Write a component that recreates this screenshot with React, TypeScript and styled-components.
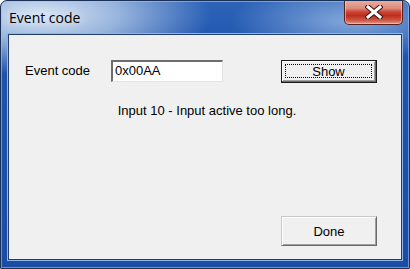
import React from "react";
import styled, { createGlobalStyle } from "styled-components";

const Global = createGlobalStyle`
  html, body { margin: 0; padding: 0; background: #ffffff; }
  body { width: 410px; height: 269px; overflow: hidden; }
`;

const Window = styled.div`
  box-sizing: border-box;
  width: 410px;
  height: 269px;
  display: flex;
  flex-direction: column;
  border: 1px solid #1a3056;
  border-radius: 7px 7px 1px 1px;
  background:
    radial-gradient(ellipse 170px 60px at 40px 14px, rgba(225, 235, 248, 0.95) 0%, rgba(190, 210, 235, 0.75) 45%, rgba(190, 210, 235, 0) 100%),
    radial-gradient(ellipse 120px 40px at 350px 20px, rgba(170, 200, 235, 0.7) 0%, rgba(170, 200, 235, 0) 100%),
    linear-gradient(180deg, #2d63b8 0%, #1f54ad 20%, #1a4ca4 100%);
  box-shadow: inset 0 0 0 1px rgba(160, 195, 240, 0.6);
  overflow: hidden;
`;

const TitleBar = styled.div`
  height: 33px;
  display: flex;
  align-items: flex-start;
  padding-left: 8px;
  padding-right: 6px;
`;

const Title = styled.div`
  font-family: "Open Sans", "Noto Sans", sans-serif;
  font-size: 14px;
  color: #000;
  line-height: 18px;
  margin-top: 8px;
  text-shadow: 0 0 8px rgba(255, 255, 255, 0.9);
`;

const CloseButton = styled.div`
  margin-left: auto;
  margin-top: -1px;
  width: 59px;
  height: 25px;
  box-sizing: border-box;
  border: 1px solid #5a2020;
  border-top: none;
  border-radius: 0 0 5px 5px;
  background: linear-gradient(
    180deg,
    #e9b3a6 0%,
    #dc8a78 35%,
    #c94534 50%,
    #bf2c1c 65%,
    #cd5a48 85%,
    #e29a88 100%
  );
  box-shadow: inset 0 0 0 1px rgba(255, 210, 200, 0.55);
  display: flex;
  align-items: center;
  justify-content: center;
`;

const Client = styled.div`
  flex: 1;
  margin: 0 7px 8px 7px;
  box-sizing: border-box;
  background: #f0f0f0;
  border: 1px solid #203e6e;
  box-shadow: 0 0 0 1px #8fb6e8;
  display: flex;
  flex-direction: column;
  padding: 25px 24px 13px 16px;
  font-family: "Liberation Sans", Arial, sans-serif;
  font-size: 13px;
  color: #000;
`;

const Row = styled.div`
  display: flex;
  align-items: flex-start;
  height: 23px;
`;

const Label = styled.div`
  width: 86px;
  line-height: 22px;
`;

const Input = styled.div`
  box-sizing: border-box;
  width: 112px;
  height: 22px;
  background: #fff;
  border-style: solid;
  border-width: 2px 1px 1px 2px;
  border-color: #6d6d6d #e3e3e3 #e3e3e3 #6d6d6d;
  padding-left: 2px;
  line-height: 18px;
`;

const Button = styled.div<{ $default?: boolean; $h: number }>`
  box-sizing: border-box;
  width: 96px;
  height: ${(p) => p.$h}px;
  background: #f0f0f0;
  border: 1px solid ${(p) => (p.$default ? "#3a3a3a" : "#c8c8c8")};
  border-right-color: ${(p) => (p.$default ? "#3a3a3a" : "#6a6a6a")};
  border-bottom-color: ${(p) => (p.$default ? "#3a3a3a" : "#6a6a6a")};
  box-shadow: inset 1px 1px 0 #ffffff, inset -1px -1px 0 #a0a0a0;
  display: flex;
  align-items: center;
  justify-content: center;
  padding: 3px;
`;

const DefaultButton = styled(Button)`
  border-width: 1px 2px 2px 1px;
  border-color: #8a8a8a #6a6a6a #6a6a6a #8a8a8a;
  box-shadow: inset 1px 1px 0 #ffffff, inset -1px -1px 0 #a0a0a0;
`;

const Focus = styled.div`
  flex: 1;
  align-self: stretch;
  border: 1px dotted #000;
  display: flex;
  align-items: center;
  justify-content: center;
`;

const ShowButton = styled(DefaultButton)`
  margin-left: 58px;
  outline: 1px solid #1a1a1a;
  outline-offset: -1px;
`;

const Message = styled.div`
  margin-top: 20px;
  text-align: center;
  line-height: 15px;
  padding-left: 12px;
`;

const DoneButton = styled(Button)`
  margin-top: auto;
  align-self: flex-end;
`;

export default function App() {
  return (
    <>
      <Global />
      <Window>
        <TitleBar>
          <Title>Event code</Title>
          <CloseButton>
            <svg width="18" height="14" viewBox="0 0 18 14">
              <path d="M3 2 L15 12 M15 2 L3 12" stroke="#3a1010" strokeWidth="5" strokeLinecap="square" />
              <path d="M3 2 L15 12 M15 2 L3 12" stroke="#ffffff" strokeWidth="3" strokeLinecap="square" />
            </svg>
          </CloseButton>
        </TitleBar>
        <Client>
          <Row>
            <Label>Event code</Label>
            <Input>0x00AA</Input>
            <ShowButton $default $h={23}>
              <Focus>Show</Focus>
            </ShowButton>
          </Row>
          <Message>Input 10 - Input active too long.</Message>
          <DoneButton $h={30}>Done</DoneButton>
        </Client>
      </Window>
    </>
  );
}
